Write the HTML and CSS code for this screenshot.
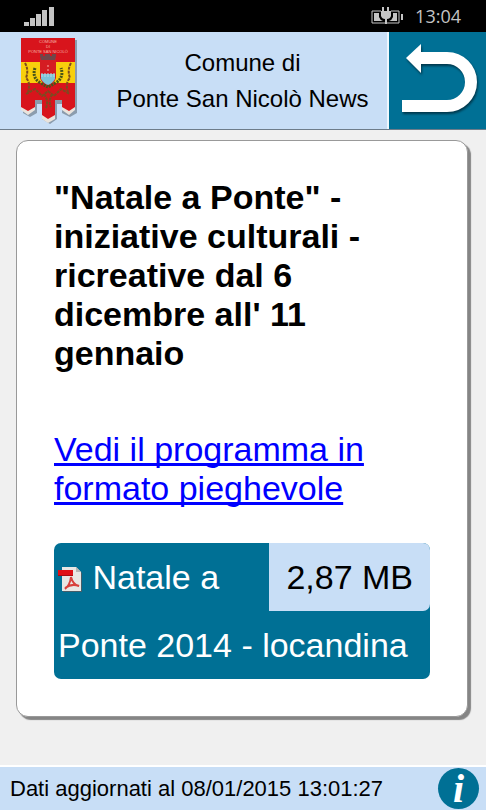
FILE: index.html
```html
<!DOCTYPE html>
<html lang="it">
<head>
<meta charset="utf-8">
<meta name="viewport" content="width=device-width, initial-scale=1">
<title>Comune di Ponte San Nicolò News</title>
<link rel="stylesheet" href="styles.css">
</head>
<body>
<div class="status">
  <svg class="signal" width="30" height="20" viewBox="0 0 30 20" aria-hidden="true">
    <path d="M0 16h5v4H0zM6 12h5v8H6zM12 8h5v12h-5zM18 4h5v16h-5zM25 1h5v19h-5z"/>
  </svg>
  <svg class="battery" width="32" height="18" viewBox="0 0 32 18" aria-hidden="true">
    <path d="M10 4H1v12h27V4h-8" fill="none" stroke="#c4c4c4"/>
    <path d="M3 6h5v4q1 3 4 4H3zM26 6h-4v4q-1 3-4 4h8zM30 7h2v6h-2z"/>
    <path d="M10 4h10v5q-1 3-4 3v5h-2v-5q-3 0-4-3zM11 0h2v4h-2zM16 0h2v4h-2z"/>
  </svg>
  <span class="clock">13:04</span>
</div>
<header class="header">
  <svg class="crest" width="58" height="88" viewBox="0 0 58 88" role="img" aria-label="Stemma">
    <path d="M3 3h54v73l-7 4-8-4v-9h-5v15l-7 5-8-5V67h-5v9l-7 4-7-4z" fill="#8b9cad"/>
    <path d="M1 69h14v4l-7 5-7-5zM22 77h13v5l-7 4-6-4zM42 69h13v4l-6 5-7-5z" fill="#e9e3dc"/>
    <path d="M1 1h54v69l-6 4-7-4v-7h-7v15l-7 4-6-4V63h-7v7l-7 4-7-4z" fill="#d8141c"/>
    <path d="M1 25h54v21H1z" fill="#f8cf0c"/>
    <path d="M20 21h16v20q-2 6-8 8-6-2-8-8z" fill="#d51c22"/>
    <path d="M21 37h14v5q-3 5-7 6-4-1-7-6z" fill="#7cc4d8"/>
    <path d="M21 37h14M21 39h14" stroke="#b5dce4" fill="none" stroke-dasharray="2 1"/>
    <path d="M28 28v2m0 2v2" stroke="#f4b0a8" fill="none"/>
    <path d="M21 23h14l1-4H20zM20 19v-2h3v2m2 0v-2h5v2m2 0v-2h4v2" fill="#70464a"/>
    <path d="M15 31q-3 9 4 14 5 3 9 5 4-2 9-5 7-5 4-14" fill="none" stroke="#485519" stroke-width="3" stroke-dasharray="2 1"/>
    <path d="M5 26q4 7 1 15 5 5 2 14M51 26q-4 7-1 15-5 5-2 14M6 57l9-5 7 7 6-5 6 5 7-7 9 5M24 57q5 7 2 14M32 57q-4 8-1 13" fill="none" stroke="#7d4a20" stroke-width="2" stroke-dasharray="3 1"/>
    <g class="crest-text">
      <text x="28" y="6">COMUNE</text>
      <text x="28" y="11">DI</text>
      <text x="28" y="16">PONTE SAN NICOLÒ</text>
    </g>
  </svg>
  <h1 class="title">Comune di<br>Ponte San Nicolò News</h1>
  <button class="back" type="button" aria-label="Indietro">
    <svg width="97" height="97" viewBox="0 0 97 97" aria-hidden="true">
      <g class="arrow">
        <path d="M31 26h27a24 24 0 0 1 0 48H13" fill="none" stroke="#fff" stroke-width="12"/>
        <path d="M17 26l15-14v29z" fill="#fff"/>
      </g>
    </svg>
  </button>
</header>
<main class="card">
  <h2 class="headline">"Natale a Ponte" - iniziative culturali - ricreative dal 6 dicembre all' 11 gennaio</h2>
  <a class="program" href="#programma">Vedi il programma in formato pieghevole</a>
  <a class="download" href="#locandina">
    <span class="size">2,87 MB</span>
    <svg class="pdf" width="25" height="25" viewBox="0 0 25 25" aria-hidden="true">
      <path d="M5 1h14l5 5v19H5z" fill="#465d68"/>
      <path d="M4 0h14l5 5v19H4z" fill="#e9e7e4"/>
      <path d="M18 0v5h5z" fill="#b8b6b4"/>
      <path d="M7 22q5-4 6-12 2 8 8 9-7-3-14 2" fill="none" stroke="#d8413c" stroke-width="2"/>
      <path d="M0 3h15v6H0z" fill="#df1016"/>
      <path d="M0 8h15v1H0z" fill="#a80b12"/>
    </svg>
    Natale a Ponte 2014 - locandina
  </a>
</main>
<footer class="footer">
  <span>Dati aggiornati al 08/01/2015 13:01:27</span>
  <button class="info" type="button" aria-label="Informazioni">i</button>
</footer>
</body>
</html>
```
FILE: styles.css
```css
* { box-sizing: border-box; }

body {
  margin: 0;
  min-height: 100vh;
  display: flex;
  flex-direction: column;
  background: #f0f0f0;
  color: #000;
  font-family: "Liberation Sans", Arial, sans-serif;
}

.status {
  height: 32px;
  padding: 0 25px 0 24px;
  display: flex;
  align-items: center;
  gap: 12px;
  background: #000;
  color: #c4c4c4;
}
.status svg { fill: #c4c4c4; }
.battery { margin-left: auto; }
.clock {
  font: 400 18px/32px "Open Sans", "Noto Sans", sans-serif;
}

.header {
  display: flex;
  align-items: center;
  background: #c8def6;
  border-bottom: 1px solid #6d7c8a;
}
.crest { margin: 0 20px; flex: none; }
.crest-text {
  fill: #f5b7a8;
  font-size: 4px;
  text-anchor: middle;
}
.title {
  flex: 1;
  margin: 0;
  font-size: 24px;
  font-weight: 400;
  line-height: 36px;
  text-align: center;
}
.back {
  padding: 0;
  border: 0;
  border-left: 2px solid #eef6fd;
  background: #007095;
}
.back svg { display: block; }
.arrow { filter: drop-shadow(1px 2px 1px #00384c); }

.card {
  margin: 10px 18px 48px 16px;
  padding: 37px;
  background: #fff;
  border: 1px solid #999;
  border-radius: 12px;
  box-shadow: 3px 3px 1px #858585;
  font-size: 34px;
  line-height: 39px;
}
.headline {
  margin: 0 0 57px;
  font-size: 34px;
  line-height: 39px;
}
.program {
  display: block;
  color: #00f;
  text-decoration-skip-ink: none;
}
.download {
  display: block;
  margin-top: 35px;
  padding-left: 4px;
  background: #007095;
  border-radius: 7px;
  color: #fff;
  line-height: 68px;
  text-decoration: none;
}
.size {
  float: right;
  padding: 0 17px;
  background: #c8def6;
  border-radius: 0 7px 7px 0;
  color: #000;
}
.pdf { vertical-align: -3px; }

.footer {
  margin-top: auto;
  height: 46px;
  padding: 0 7px 0 10px;
  display: flex;
  align-items: center;
  justify-content: space-between;
  background: #c8def6;
  border-top: 2px solid #fff;
  border-bottom: 1px solid #4a6275;
  font-size: 22px;
}
.info {
  width: 41px;
  height: 41px;
  padding: 0;
  border: 0;
  border-radius: 50%;
  background: #007095;
  color: #fff;
  font: italic 700 40px/36px "Liberation Serif", serif;
}
```
